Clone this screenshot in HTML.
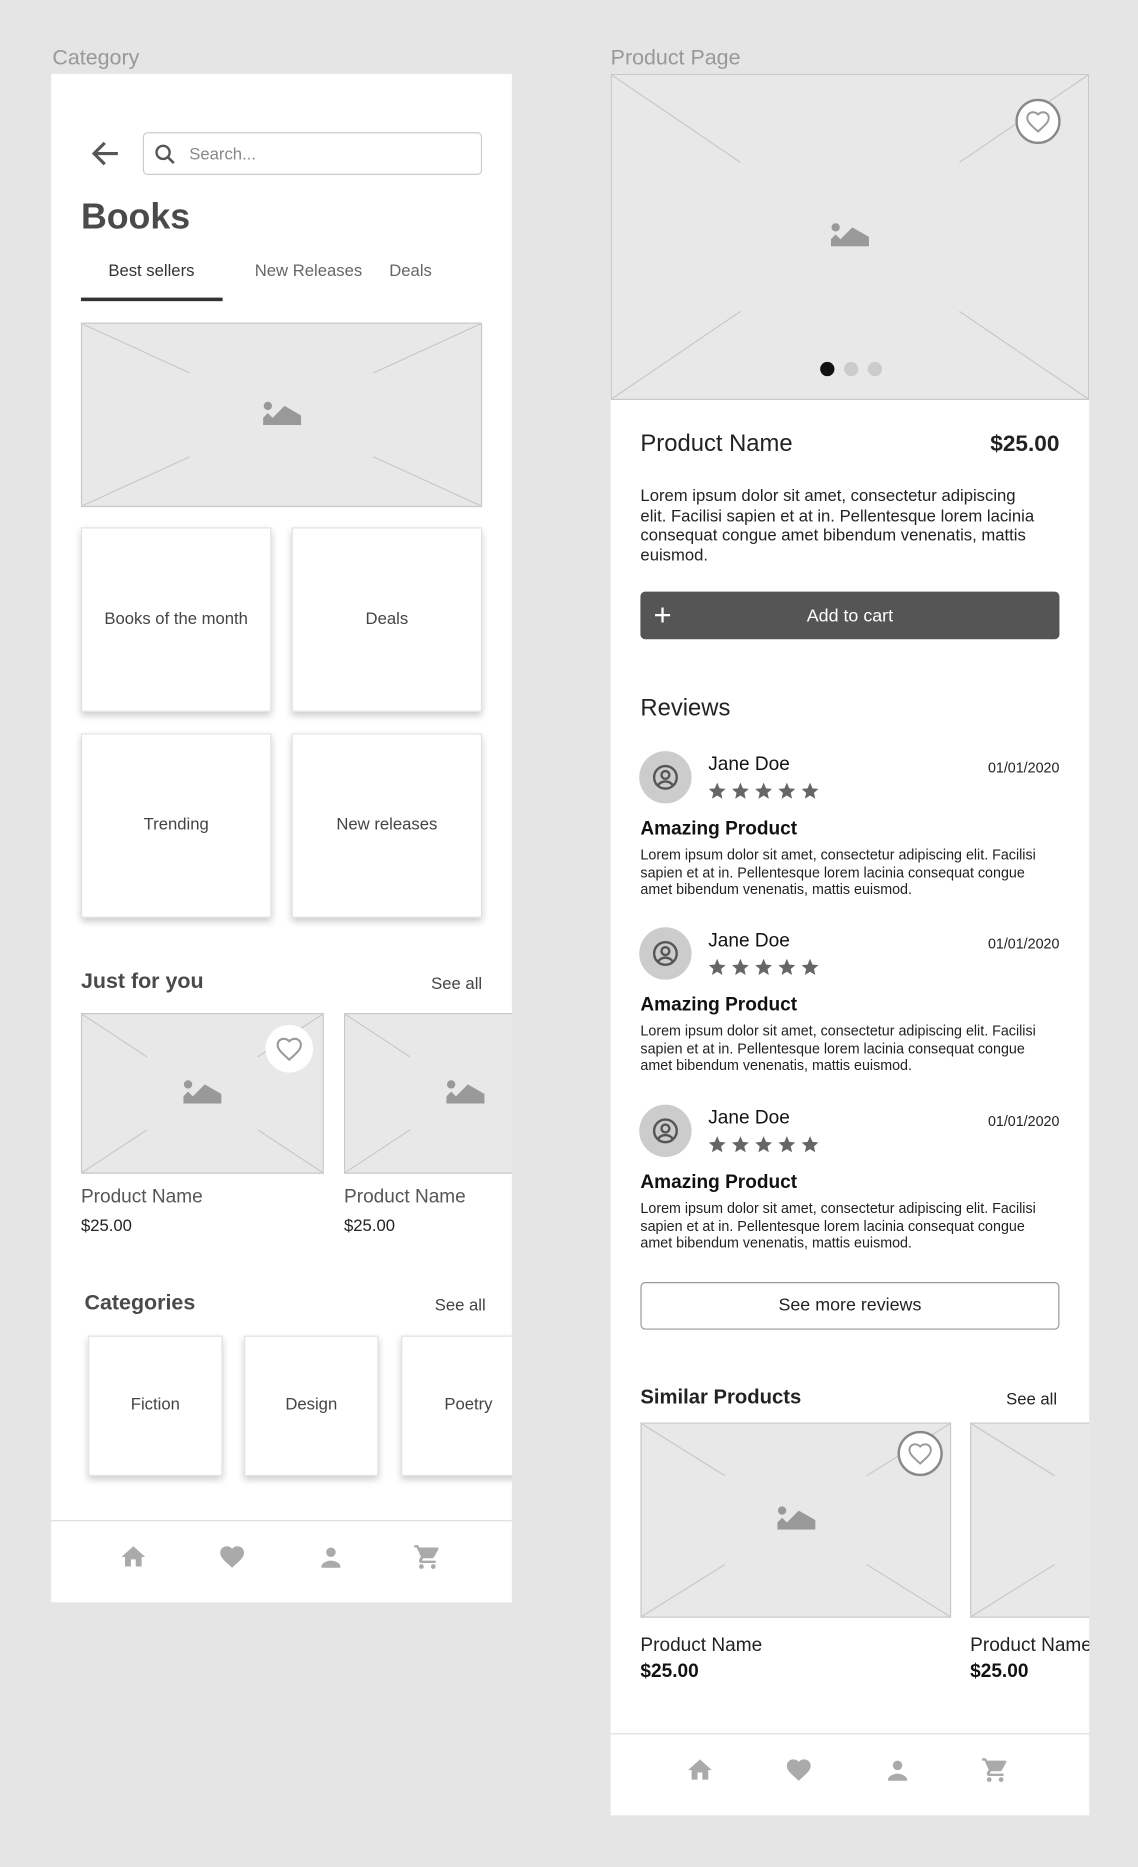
<!DOCTYPE html>
<html><head><meta charset="utf-8"><style>
*{box-sizing:border-box;margin:0;padding:0}
html,body{width:1138px;height:1866px;overflow:hidden;background:#e5e5e5;font-family:"Liberation Sans",Arial,sans-serif}
#s{position:absolute;left:0;top:0;width:956px;height:1568px;transform:scale(1.19038);transform-origin:0 0}
.a{position:absolute}
.ph{position:absolute;background:#e8e8e8;border:1px solid #c8c8c8;overflow:hidden}
.ph svg.x{position:absolute;left:0;top:0;width:100%;height:100%}
.ph svg.i{position:absolute;left:50%;top:50%;width:32px;height:20px;margin:-12px 0 0 -16px}
.card{position:absolute;background:#fff;border:1px solid #e2e2e2;box-shadow:0 3px 6px rgba(0,0,0,.22);display:flex;align-items:center;justify-content:center;font-size:14px;color:#444;padding-bottom:4px}
.t{position:absolute;white-space:nowrap}
.heart{position:absolute;border-radius:50%;background:#fff;display:flex;align-items:center;justify-content:center}
</style></head><body><div id="s">
<svg width="0" height="0" style="position:absolute"><defs>
<symbol id="X" viewBox="0 0 100 100" preserveAspectRatio="none"><g stroke="#c8c8c8" stroke-width="1" fill="none"><line x1="0" y1="0" x2="27" y2="27" vector-effect="non-scaling-stroke"/><line x1="100" y1="0" x2="73" y2="27" vector-effect="non-scaling-stroke"/><line x1="0" y1="100" x2="27" y2="73" vector-effect="non-scaling-stroke"/><line x1="100" y1="100" x2="73" y2="73" vector-effect="non-scaling-stroke"/></g></symbol>
<symbol id="I" viewBox="0 0 32 20"><circle cx="4" cy="4" r="3.5" fill="#999"/><path d="M0 20V14l4-4 4 4 10-10 14 8v8z" fill="#999"/></symbol>
<symbol id="H" viewBox="0 0 24 24"><path d="M12 20.5l-1.3-1.2C6 15.1 3 12.4 3 9a4.6 4.6 0 0 1 4.7-4.7c1.6 0 3.1.7 4.3 1.9 1.2-1.2 2.7-1.9 4.3-1.9A4.6 4.6 0 0 1 21 9c0 3.4-3 6.1-7.7 10.3z" fill="none" stroke="#999" stroke-width="1.6"/></symbol>
<symbol id="HF" viewBox="0 0 24 24"><path d="M12 21l-1.4-1.3C5.4 15.1 2 12.1 2 8.5A5.4 5.4 0 0 1 7.5 3c1.7 0 3.4.8 4.5 2.1A6 6 0 0 1 16.5 3 5.4 5.4 0 0 1 22 8.5c0 3.6-3.4 6.6-8.6 11.2z"/></symbol>
<symbol id="HM" viewBox="0 0 24 24"><path d="M10 20v-6h4v6h5v-8h3L12 3 2 12h3v8z"/></symbol>
<symbol id="US" viewBox="0 0 24 24"><circle cx="12" cy="8" r="4"/><path d="M4 20c0-3 5-5 8-5s8 2 8 5v1H4z"/></symbol>
<symbol id="CT" viewBox="0 0 24 24"><path d="M7 18a2 2 0 1 0 0 4 2 2 0 0 0 0-4zM1 2v2h2l3.6 7.6-1.4 2.4A2 2 0 0 0 7 17h12v-2H7.4l1.1-2h7.5a2 2 0 0 0 1.7-1l3.6-6.5A1 1 0 0 0 20.4 4H5.2l-.9-2zm16 16a2 2 0 1 0 0 4 2 2 0 0 0 0-4z"/></symbol>
<symbol id="ST" viewBox="0 0 24 24"><path d="M12 2l2.9 6.9 7.1.6-5.4 4.7 1.6 7-6.2-3.8-6.2 3.8 1.6-7L2 9.5l7.1-.6z"/></symbol>
<symbol id="AV" viewBox="0 0 24 24"><g fill="none" stroke="#555" stroke-width="2"><circle cx="12" cy="12" r="9.5"/><circle cx="12" cy="10" r="3.3"/><path d="M5.8 18.8c1.5-2.3 3.7-3.3 6.2-3.3s4.7 1 6.2 3.3"/></g></symbol>
</defs></svg>

<div class="t" style="left:44px;top:38px;font-size:18px;color:#999">Category</div>
<div class="t" style="left:513px;top:38px;font-size:18px;color:#999">Product Page</div>

<!-- LEFT PANEL -->
<div class="a" style="left:43px;top:62px;width:387px;height:1284px;background:#fff;overflow:hidden">
 <svg class="a" style="left:32px;top:55px" width="28" height="24" viewBox="0 0 28 24"><path d="M24 12H5M13 3l-9 9 9 9" fill="none" stroke="#555" stroke-width="2.6"/></svg>
 <div class="a" style="left:77px;top:49px;width:285px;height:36px;border:1px solid #ccc;border-radius:4px"></div>
 <svg class="a" style="left:86px;top:58px" width="20" height="20" viewBox="0 0 20 20"><circle cx="8" cy="8" r="5.5" fill="none" stroke="#555" stroke-width="2"/><path d="M12 12l5 5" stroke="#555" stroke-width="2.2"/></svg>
 <div class="t" style="left:116px;top:59px;font-size:14px;color:#888">Search...</div>
 <div class="t" style="left:25px;top:104px;font-size:30px;color:#4a4a4a;font-weight:bold">Books</div>
 <div class="t" style="left:48px;top:157px;font-size:14px;color:#333">Best sellers</div>
 <div class="t" style="left:171px;top:157px;font-size:14px;color:#666">New Releases</div>
 <div class="t" style="left:284px;top:157px;font-size:14px;color:#666">Deals</div>
 <div class="a" style="left:25px;top:188px;width:119px;height:3px;background:#333"></div>
 <div class="ph" style="left:25px;top:209px;width:337px;height:155px"><svg class="x"><use href="#X"/></svg><svg class="i"><use href="#I"/></svg></div>
 <div class="card" style="left:25px;top:381px;width:160px;height:155px">Books of the month</div>
 <div class="card" style="left:202px;top:381px;width:160px;height:155px">Deals</div>
 <div class="card" style="left:25px;top:554px;width:160px;height:155px">Trending</div>
 <div class="card" style="left:202px;top:554px;width:160px;height:155px">New releases</div>
 <div class="t" style="left:25px;top:752px;font-size:18px;color:#4a4a4a;font-weight:bold">Just for you</div>
 <div class="t" style="right:25px;top:756px;font-size:14px;color:#444">See all</div>
 <div class="ph" style="left:25px;top:789px;width:204px;height:135px"><svg class="x"><use href="#X"/></svg><svg class="i"><use href="#I"/></svg><div class="heart" style="left:154px;top:9px;width:40px;height:40px"><svg width="26" height="26"><use href="#H"/></svg></div></div>
 <div class="ph" style="left:246px;top:789px;width:204px;height:135px"><svg class="x"><use href="#X"/></svg><svg class="i" style="left:101px"><use href="#I"/></svg></div>
 <div class="t" style="left:25px;top:935px;font-size:16px;color:#555">Product Name</div>
 <div class="t" style="left:25px;top:959px;font-size:14px;color:#222">$25.00</div>
 <div class="t" style="left:246px;top:935px;font-size:16px;color:#555">Product Name</div>
 <div class="t" style="left:246px;top:959px;font-size:14px;color:#222">$25.00</div>
 <div class="t" style="left:28px;top:1022px;font-size:18px;color:#4a4a4a;font-weight:bold">Categories</div>
 <div class="t" style="right:22px;top:1026px;font-size:14px;color:#444">See all</div>
 <div class="card" style="left:31px;top:1060px;width:113px;height:118px">Fiction</div>
 <div class="card" style="left:162px;top:1060px;width:113px;height:118px">Design</div>
 <div class="card" style="left:294px;top:1060px;width:113px;height:118px">Poetry</div>
 <div class="a" style="left:0;top:1215px;width:387px;height:1px;background:#ddd"></div>
 <svg class="a" style="left:57px;top:1234px;fill:#aaa" width="24" height="24"><use href="#HM"/></svg>
 <svg class="a" style="left:140px;top:1234px;fill:#aaa" width="24" height="24"><use href="#HF"/></svg>
 <svg class="a" style="left:223px;top:1234px;fill:#aaa" width="24" height="24"><use href="#US"/></svg>
 <svg class="a" style="left:304px;top:1234px;fill:#aaa" width="24" height="24"><use href="#CT"/></svg>
</div>

<!-- RIGHT PANEL -->
<div class="a" style="left:513px;top:62px;width:402px;height:1463px;background:#fff;overflow:hidden">
 <div class="ph" style="left:0;top:0;width:402px;height:274px"><svg class="x"><use href="#X"/></svg><svg class="i"><use href="#I"/></svg>
  <div class="heart" style="left:339px;top:20px;width:38px;height:38px;border:2px solid #888"><svg width="24" height="24"><use href="#H" style="stroke:#666"/></svg></div>
  <div class="a" style="left:175px;top:241px;width:12px;height:12px;border-radius:50%;background:#111"></div>
  <div class="a" style="left:195px;top:241px;width:12px;height:12px;border-radius:50%;background:#ccc"></div>
  <div class="a" style="left:215px;top:241px;width:12px;height:12px;border-radius:50%;background:#ccc"></div>
 </div>
 <div class="t" style="left:25px;top:300px;font-size:20px;color:#222">Product Name</div>
 <div class="t" style="right:25px;top:301px;font-size:19px;color:#222;font-weight:bold">$25.00</div>
 <div class="a" style="left:25px;top:346px;width:338px;font-size:14px;line-height:16.5px;color:#222">Lorem ipsum dolor sit amet, consectetur adipiscing elit. Facilisi sapien et at in. Pellentesque lorem lacinia consequat congue amet bibendum venenatis, mattis euismod.</div>
 <div class="a" style="left:25px;top:435px;width:352px;height:40px;background:#555;border-radius:4px;color:#fff"><div class="t" style="left:11px;top:5px;font-size:26px;line-height:28px">+</div><div class="t" style="left:0;right:0;top:12px;text-align:center;font-size:15px">Add to cart</div></div>
 <div class="t" style="left:25px;top:522px;font-size:20px;color:#222">Reviews</div>

 <div class="a" style="left:0;top:568px;width:402px;height:140px">
  <div class="a" style="left:24px;top:1px;width:44px;height:44px;border-radius:50%;background:#ccc"></div><svg class="a" style="left:34px;top:11px" width="24" height="24"><use href="#AV"/></svg>
  <div class="t" style="left:82px;top:4px;font-size:16px;color:#111">Jane Doe</div>
  <div class="t" style="right:25px;top:8px;font-size:12px;color:#222">01/01/2020</div>
  <svg class="a" style="left:81px;top:26px;fill:#666" width="96" height="17"><use href="#ST" x="0" width="17" height="17"/><use href="#ST" x="19.5" width="17" height="17"/><use href="#ST" x="39" width="17" height="17"/><use href="#ST" x="58.5" width="17" height="17"/><use href="#ST" x="78" width="17" height="17"/></svg>
  <div class="t" style="left:25px;top:58px;font-size:16px;color:#111;font-weight:bold">Amazing Product</div>
  <div class="a" style="left:25px;top:81px;width:340px;font-size:12px;line-height:14.5px;color:#222">Lorem ipsum dolor sit amet, consectetur adipiscing elit. Facilisi sapien et at in. Pellentesque lorem lacinia consequat congue amet bibendum venenatis, mattis euismod.</div>
 </div>
 <div class="a" style="left:0;top:716px;width:402px;height:140px">
  <div class="a" style="left:24px;top:1px;width:44px;height:44px;border-radius:50%;background:#ccc"></div><svg class="a" style="left:34px;top:11px" width="24" height="24"><use href="#AV"/></svg>
  <div class="t" style="left:82px;top:4px;font-size:16px;color:#111">Jane Doe</div>
  <div class="t" style="right:25px;top:8px;font-size:12px;color:#222">01/01/2020</div>
  <svg class="a" style="left:81px;top:26px;fill:#666" width="96" height="17"><use href="#ST" x="0" width="17" height="17"/><use href="#ST" x="19.5" width="17" height="17"/><use href="#ST" x="39" width="17" height="17"/><use href="#ST" x="58.5" width="17" height="17"/><use href="#ST" x="78" width="17" height="17"/></svg>
  <div class="t" style="left:25px;top:58px;font-size:16px;color:#111;font-weight:bold">Amazing Product</div>
  <div class="a" style="left:25px;top:81px;width:340px;font-size:12px;line-height:14.5px;color:#222">Lorem ipsum dolor sit amet, consectetur adipiscing elit. Facilisi sapien et at in. Pellentesque lorem lacinia consequat congue amet bibendum venenatis, mattis euismod.</div>
 </div>
 <div class="a" style="left:0;top:865px;width:402px;height:140px">
  <div class="a" style="left:24px;top:1px;width:44px;height:44px;border-radius:50%;background:#ccc"></div><svg class="a" style="left:34px;top:11px" width="24" height="24"><use href="#AV"/></svg>
  <div class="t" style="left:82px;top:4px;font-size:16px;color:#111">Jane Doe</div>
  <div class="t" style="right:25px;top:8px;font-size:12px;color:#222">01/01/2020</div>
  <svg class="a" style="left:81px;top:26px;fill:#666" width="96" height="17"><use href="#ST" x="0" width="17" height="17"/><use href="#ST" x="19.5" width="17" height="17"/><use href="#ST" x="39" width="17" height="17"/><use href="#ST" x="58.5" width="17" height="17"/><use href="#ST" x="78" width="17" height="17"/></svg>
  <div class="t" style="left:25px;top:58px;font-size:16px;color:#111;font-weight:bold">Amazing Product</div>
  <div class="a" style="left:25px;top:81px;width:340px;font-size:12px;line-height:14.5px;color:#222">Lorem ipsum dolor sit amet, consectetur adipiscing elit. Facilisi sapien et at in. Pellentesque lorem lacinia consequat congue amet bibendum venenatis, mattis euismod.</div>
 </div>

 <div class="a" style="left:25px;top:1015px;width:352px;height:40px;border:1px solid #999;border-radius:4px;text-align:center;line-height:38px;font-size:15px;color:#222">See more reviews</div>
 <div class="t" style="left:25px;top:1102px;font-size:17px;color:#222;font-weight:bold">Similar Products</div>
 <div class="t" style="right:27px;top:1105px;font-size:14px;color:#222">See all</div>
 <div class="ph" style="left:25px;top:1133px;width:261px;height:164px"><svg class="x"><use href="#X"/></svg><svg class="i"><use href="#I"/></svg><div class="heart" style="left:215px;top:6px;width:38px;height:38px;border:2px solid #888"><svg width="24" height="24"><use href="#H" style="stroke:#666"/></svg></div></div>
 <div class="ph" style="left:302px;top:1133px;width:261px;height:164px"><svg class="x"><use href="#X"/></svg></div>
 <div class="t" style="left:25px;top:1312px;font-size:16px;color:#222">Product Name</div>
 <div class="t" style="left:25px;top:1334px;font-size:16px;color:#111;font-weight:bold">$25.00</div>
 <div class="t" style="left:302px;top:1312px;font-size:16px;color:#222">Product Name</div>
 <div class="t" style="left:302px;top:1334px;font-size:16px;color:#111;font-weight:bold">$25.00</div>
 <div class="a" style="left:0;top:1394px;width:402px;height:1px;background:#ddd"></div>
 <svg class="a" style="left:63px;top:1413px;fill:#aaa" width="24" height="24"><use href="#HM"/></svg>
 <svg class="a" style="left:146px;top:1413px;fill:#aaa" width="24" height="24"><use href="#HF"/></svg>
 <svg class="a" style="left:229px;top:1413px;fill:#aaa" width="24" height="24"><use href="#US"/></svg>
 <svg class="a" style="left:311px;top:1413px;fill:#aaa" width="24" height="24"><use href="#CT"/></svg>
</div>
</div></body></html>
